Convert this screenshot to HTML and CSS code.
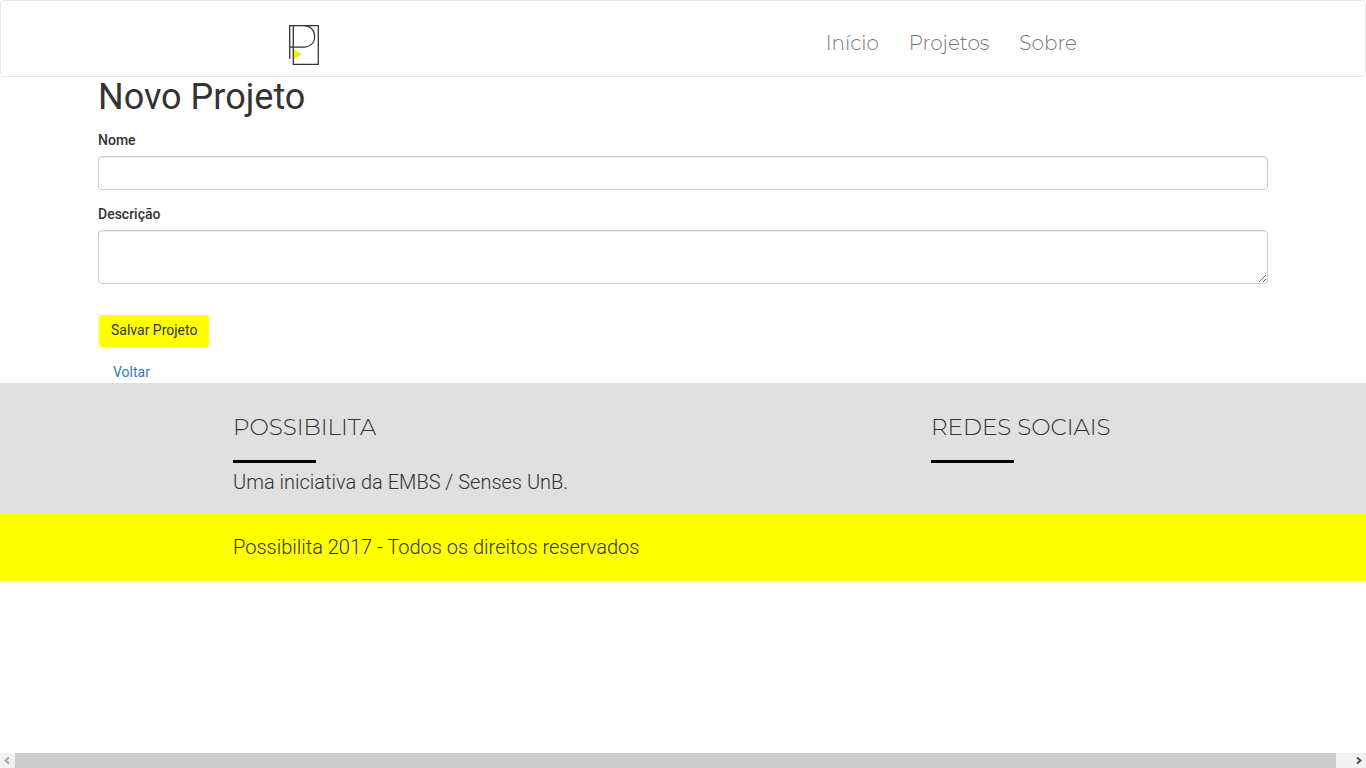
FILE: index.html
```html
<!DOCTYPE html>
<html lang="pt-BR">
<head>
<meta charset="utf-8">
<meta name="viewport" content="width=device-width, initial-scale=1">
<title>Possibilita - Novo Projeto</title>
<link rel="stylesheet" href="styles.css">
</head>
<body>
<header class="navbar">
  <div class="navbar-inner">
    <a class="brand" href="#" aria-label="Possibilita">
      <svg class="logo" width="30" height="40" viewBox="0 0 30 40" fill="none" stroke="#333" stroke-width="1.3">
        <path d="M4.5 28.500v6L13 29.200 4.500 24z" fill="#f4ee10" stroke="none"/>
        <path d="M.7 34V.7H29.3V39.3H4.3V.7M.7 22.2H13C21 22.2 25.600 18 25.600 11.4S21 .7 14 .7"/>
      </svg>
    </a>
    <nav class="menu">
      <a href="#">Início</a>
      <a href="#">Projetos</a>
      <a href="#">Sobre</a>
    </nav>
  </div>
</header>
<main class="container">
  <h1 class="title">Novo Projeto</h1>
  <form class="form">
    <div class="field">
      <label for="nome">Nome</label>
      <input class="control" id="nome" type="text">
    </div>
    <div class="field">
      <label for="descricao">Descrição</label>
      <textarea class="control control-area" id="descricao" rows="2"></textarea>
    </div>
    <button class="save" type="button">Salvar Projeto</button>
  </form>
  <a class="back" href="#">Voltar</a>
</main>
<footer>
  <div class="footer-top">
    <div class="footer-inner footer-columns">
      <section>
        <h2 class="footer-title">POSSIBILITA</h2>
        <p class="footer-text">Uma iniciativa da EMBS / Senses UnB.</p>
      </section>
      <section>
        <h2 class="footer-title">REDES SOCIAIS</h2>
      </section>
    </div>
  </div>
  <div class="footer-bottom">
    <p class="footer-inner footer-text">Possibilita 2017 - Todos os direitos reservados</p>
  </div>
</footer>
<div class="scrollbar" aria-hidden="true">
  <svg width="15" height="15" viewBox="0 0 15 15" fill="none" stroke="#a3a3a3" stroke-width="2"><path d="M9 4.5l-3.500 3 3.500 3"/></svg>
  <div class="scroll-thumb"></div>
  <svg width="15" height="15" viewBox="0 0 15 15" fill="none" stroke="#505050" stroke-width="2"><path d="M6 4.500l3.500 3-3.500 3"/></svg>
</div>
</body>
</html>
```
FILE: styles.css
```css
* { box-sizing: border-box; }

body {
  margin: 0;
  min-height: 100vh;
  display: flex;
  flex-direction: column;
  background: #fff;
  color: #333;
  font: 14px/20px Roboto, sans-serif;
}

a { text-decoration: none; }

.navbar {
  padding: 24px 16px 11px;
  border: 1px solid #e7e7e7;
  border-radius: 4px;
}

.navbar-inner {
  display: flex;
  align-items: flex-start;
  justify-content: space-between;
  max-width: 788px;
  margin: 0 auto;
}

.brand, .logo { display: block; }

.menu {
  display: flex;
  gap: 30px;
  line-height: 36px;
}

.menu a {
  color: #777;
  font-family: Montserrat, Inter, sans-serif;
  font-size: 20px;
  font-weight: 300;
}

.container {
  width: 100%;
  max-width: 1200px;
  margin: 0 auto;
  padding: 0 15px;
}

.title {
  margin: 0 0 13px;
  font-size: 36px;
  font-weight: 400;
  line-height: 40px;
}

.field { margin-bottom: 14px; }

.field label {
  display: block;
  margin-bottom: 6px;
  font-weight: 500;
}

.control {
  display: block;
  width: 100%;
  height: 34px;
  padding: 6px 12px;
  border: 1px solid #ccc;
  border-radius: 4px;
  background: #fff;
  box-shadow: inset 0 1px 1px rgba(0, 0, 0, .075);
  color: #555;
  font: inherit;
}

.control-area {
  height: 54px;
  resize: vertical;
}

.save {
  display: block;
  margin-top: 30px;
  padding: 5px 12px 7px;
  border: 1px solid #fff;
  border-radius: 4px;
  background: #ff0;
  color: #333;
  font: inherit;
}

.back {
  display: inline-block;
  margin-top: 14px;
  padding: 0 15px 1px;
  color: #337ab7;
}

.footer-top {
  padding: 32px 16px 21px;
  background: #e0e0e0;
}

.footer-bottom {
  padding: 22px 16px 23px;
  background: #ff0;
}

.footer-inner {
  max-width: 900px;
  margin: 0 auto;
}

.footer-columns {
  display: grid;
  grid-template-columns: 1fr 202px;
}

.footer-title {
  margin: 0 0 8px;
  font-family: Montserrat, Inter, sans-serif;
  font-size: 23px;
  font-weight: 300;
  line-height: 24px;
}

.footer-title::after {
  content: "";
  display: block;
  width: 83px;
  height: 3px;
  margin-top: 21px;
  background: #000;
}

.footer-text {
  margin-top: 0;
  margin-bottom: 0;
  font-size: 20px;
  font-weight: 300;
  line-height: 22px;
}

.scrollbar {
  display: flex;
  margin-top: auto;
  background: #f1f1f1;
}

.scroll-thumb {
  flex: 1;
  margin-right: 15px;
  background: #cdcdcd;
}
```
